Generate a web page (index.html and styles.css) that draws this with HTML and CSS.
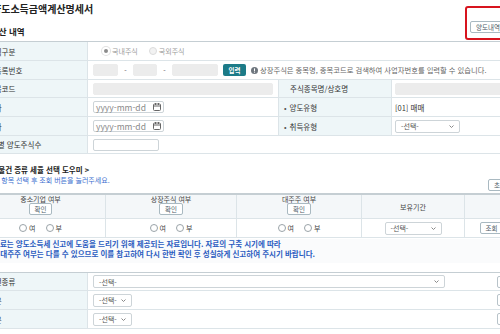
FILE: index.html
```html
<!DOCTYPE html>
<html lang="ko">
<head>
  <meta charset="UTF-8">
  <meta name="viewport" content="width=device-width, initial-scale=1.0">
  <title>양도소득금액계산명세서</title>
  <link rel="stylesheet" href="styles.css">
</head>
<body>
  <div class="page">
    <h1 class="title">양도소득금액계산명세서</h1>

    <div class="section-head">
      <h2>계산 내역</h2>
      <div class="highlight">
        <button class="btn">양도내역</button>
      </div>
    </div>

    <!-- 계산 내역 -->
    <div class="grid calc-grid">
      <div class="th">양도주식구분</div>
      <div class="td span3">
        <label class="radio disabled"><span class="dot checked"></span>국내주식</label>
        <label class="radio disabled"><span class="dot"></span>국외주식</label>
      </div>

      <div class="th">사업자등록번호</div>
      <div class="td span3">
        <span class="input gray w25"></span>
        <span class="dash">-</span>
        <span class="input gray w24"></span>
        <span class="dash">-</span>
        <span class="input gray w46"></span>
        <button class="btn-teal">입력</button>
        <svg class="info-icon" width="7" height="7" viewBox="0 0 8 8">
          <circle cx="4" cy="4" r="4" fill="#6e767e"/>
          <rect x="3.4" y="1.6" width="1.2" height="3" fill="#fff"/>
          <rect x="3.4" y="5.3" width="1.2" height="1.2" fill="#fff"/>
        </svg>
        <span class="hint">상장주식은 종목명, 종목코드로 검색하여 사업자번호를 입력할 수 있습니다.</span>
      </div>

      <div class="th">주식종목코드</div>
      <div class="td">
        <span class="input gray full"></span>
      </div>
      <div class="th sub indent">주식종목명/상호명</div>
      <div class="td last">
        <span class="input gray full"></span>
      </div>

      <div class="th">양도일자</div>
      <div class="td">
        <span class="input date">yyyy-mm-dd
          <svg width="8" height="8" viewBox="0 0 8 8">
            <rect x="0.5" y="1" width="7" height="6.5" rx="1" fill="none" stroke="#666"/>
            <path d="M0.5 3h7M2.5 0v2M5.5 0v2" stroke="#666"/>
          </svg>
        </span>
      </div>
      <div class="th sub"><span class="bullet">•</span>양도유형</div>
      <div class="td last">[01] 매매</div>

      <div class="th">취득일자</div>
      <div class="td">
        <span class="input date">yyyy-mm-dd
          <svg width="8" height="8" viewBox="0 0 8 8">
            <rect x="0.5" y="1" width="7" height="6.5" rx="1" fill="none" stroke="#666"/>
            <path d="M0.5 3h7M2.5 0v2M5.5 0v2" stroke="#666"/>
          </svg>
        </span>
      </div>
      <div class="th sub"><span class="bullet">•</span>취득유형</div>
      <div class="td last">
        <span class="select w65">-선택-
          <svg width="5" height="3" viewBox="0 0 5 3"><path d="M0.5 0.5L2.5 2.5L4.5 0.5" fill="none" stroke="#888"/></svg>
        </span>
      </div>

      <div class="th wide">종목별 양도주식수</div>
      <div class="td span3">
        <span class="input w66"></span>
      </div>
    </div>

    <!-- 세율 선택 도우미 -->
    <div class="helper-head">
      <div>
        <div class="helper-title">&lt; 양도물건 종류 세율 선택 도우미 &gt;</div>
        <div class="helper-desc">아래 세 항목 선택 후 조회 버튼을 눌러주세요.</div>
      </div>
      <button class="btn end">초기화</button>
    </div>

    <div class="grid check-grid">
      <div class="ch">중소기업 여부<button class="btn">확인</button></div>
      <div class="ch">상장주식 여부<button class="btn">확인</button></div>
      <div class="ch">대주주 여부<button class="btn">확인</button></div>
      <div class="ch center">보유기간</div>
      <div class="ch last"></div>

      <div class="cd">
        <label class="radio"><span class="dot"></span>여</label>
        <label class="radio"><span class="dot"></span>부</label>
      </div>
      <div class="cd">
        <label class="radio"><span class="dot"></span>여</label>
        <label class="radio"><span class="dot"></span>부</label>
      </div>
      <div class="cd">
        <label class="radio"><span class="dot"></span>여</label>
        <label class="radio"><span class="dot"></span>부</label>
      </div>
      <div class="cd">
        <span class="select w57">-선택-
          <svg width="5" height="3" viewBox="0 0 5 3"><path d="M0.5 0.5L2.5 2.5L4.5 0.5" fill="none" stroke="#888"/></svg>
        </span>
      </div>
      <div class="cd last"><button class="btn">조회</button></div>
    </div>

    <div class="notice">
      본 자료는 양도소득세 신고에 도움을 드리기 위해 제공되는 자료입니다. 자료의 구축 시기에 따라<br>
      상장·대주주 여부는 다를 수 있으므로 이를 참고하여 다시 한번 확인 후 성실하게 신고하여 주시기 바랍니다.
    </div>

    <!-- 양도물건 종류 -->
    <div class="grid kind-grid">
      <div class="th">양도물건종류</div>
      <div class="td">
        <span class="select w352">-선택-
          <svg width="5" height="3" viewBox="0 0 5 3"><path d="M0.5 0.5L2.5 2.5L4.5 0.5" fill="none" stroke="#888"/></svg>
        </span>
        <span class="side-box"></span>
      </div>

      <div class="th">세율구분</div>
      <div class="td">
        <span class="select w39">-선택-
          <svg width="5" height="3" viewBox="0 0 5 3"><path d="M0.5 0.5L2.5 2.5L4.5 0.5" fill="none" stroke="#888"/></svg>
        </span>
        <span class="side-box"></span>
      </div>

      <div class="th">감면구분</div>
      <div class="td">
        <span class="select w39">-선택-
          <svg width="5" height="3" viewBox="0 0 5 3"><path d="M0.5 0.5L2.5 2.5L4.5 0.5" fill="none" stroke="#888"/></svg>
        </span>
        <span class="side-box"></span>
      </div>
    </div>
  </div>
</body>
</html>
```

FILE: styles.css
```css
* {
  box-sizing: border-box;
}

body {
  margin: 0;
  overflow: hidden;
  background: #fff;
  font-family: "Noto Sans CJK KR", "Noto Sans", sans-serif;
  color: #333;
}

.page {
  width: 550px;
  margin-left: -32px;
}

.title {
  margin: 0;
  padding: 2px 0 0 24px;
  font-size: 10px;
  line-height: 13px;
  font-weight: 700;
  color: #222;
}

.section-head {
  display: flex;
  justify-content: space-between;
  align-items: flex-end;
  height: 26px;
  padding: 0 7px 0 23px;
}

.section-head h2 {
  margin: 0 0 4px;
  font-size: 8.5px;
  line-height: 11px;
  font-weight: 700;
  color: #222;
}

.highlight {
  margin-bottom: 1px;
  padding: 3px;
  border: 2px solid #d7141e;
  border-radius: 3px;
}

.btn {
  height: 12px;
  padding: 0 5px;
  border: 1px solid #a9b9c1;
  border-radius: 2px;
  background: #fff;
  font-family: inherit;
  font-size: 6.5px;
  line-height: 10px;
  color: #4f5d68;
  cursor: pointer;
}

.btn.end {
  align-self: flex-end;
}

/* grids */
.grid {
  display: grid;
  border-top: 1px solid #c5ced3;
}

.calc-grid {
  grid-template-columns: 120px 190px 114px 1fr;
  grid-template-rows: 19px 19px 18px 19px 19px 18px;
}

.th {
  display: flex;
  align-items: center;
  padding-left: 6px;
  background: #eef6f8;
  border-bottom: 1px solid #dce4e8;
  border-right: 1px solid #dce4e8;
  font-size: 7.5px;
  color: #333;
  white-space: nowrap;
}

.th.wide {
  padding-left: 16px;
}

.th.sub {
  padding-left: 5px;
  border-left: 1px solid #dce4e8;
}

.th.indent {
  padding-left: 11px;
}

.bullet {
  margin-right: 3px;
  color: #555;
}

.td {
  display: flex;
  align-items: center;
  padding: 0 5px;
  border-bottom: 1px solid #dce4e8;
  font-size: 7.5px;
  color: #333;
  white-space: nowrap;
}

.td.last {
  padding-left: 3px;
}

.span3 {
  grid-column: span 3;
}

/* form controls */
.input {
  display: inline-flex;
  align-items: center;
  height: 12px;
  border: 1px solid #cdd4d8;
  border-radius: 2px;
  background: #fff;
}

.input.gray {
  background: #ececec;
  border-color: #ececec;
}

.full { width: 100%; }
.w24 { width: 24px; }
.w25 { width: 25px; }
.w46 { width: 46px; }
.w66 { width: 66px; }

.dash {
  width: 15px;
  text-align: center;
  font-size: 7px;
  color: #555;
}

.btn-teal {
  height: 12px;
  width: 23px;
  margin-left: 5px;
  padding: 0;
  border: none;
  border-radius: 2px;
  background: #1c7b88;
  font-family: inherit;
  font-size: 6.5px;
  font-weight: 700;
  color: #fff;
}

.info-icon {
  margin-left: 5px;
}

.hint {
  margin-left: 2px;
  font-size: 7.3px;
  color: #666;
}

.date {
  width: 71px;
  padding: 0 2px;
  justify-content: space-between;
  font-size: 8.5px;
  color: #8a8a8a;
}

.select {
  display: inline-flex;
  align-items: center;
  justify-content: space-between;
  height: 13px;
  padding: 0 5px;
  border: 1px solid #cdd4d8;
  border-radius: 2px;
  background: #fff;
  font-size: 7px;
  color: #555;
}

.w39 { width: 39px; }
.w57 { width: 57px; }
.w65 { width: 65px; }
.w352 { width: 352px; }

.side-box {
  width: 16px;
  height: 12px;
  margin-left: auto;
  border: 1px solid #b8c3c9;
  border-radius: 2px;
}

.radio {
  display: inline-flex;
  align-items: center;
  gap: 2px;
  font-size: 7px;
  color: #444;
}

.radio + .radio {
  margin-left: 10px;
}

.radio.disabled {
  color: #9a9a9a;
}

.radio.disabled + .radio.disabled {
  margin-left: 11px;
}

.calc-grid .radio:first-child {
  margin-left: 9px;
}

.dot {
  width: 8px;
  height: 8px;
  border: 1px solid #9aa3a8;
  border-radius: 50%;
  background: #fff;
}

.radio.disabled .dot {
  border-color: #dcdcdc;
  background: #f2f2f2;
}

.radio.disabled .dot.checked {
  border: 2px solid #fff;
  background: #8c8c8c;
  box-shadow: 0 0 0 1px #e2e2e2;
}

/* helper */
.helper-head {
  display: flex;
  justify-content: space-between;
  height: 26px;
  margin-top: 11px;
  padding-left: 10px;
}

.helper-title {
  font-size: 7.5px;
  line-height: 10px;
  font-weight: 700;
  color: #222;
}

.helper-desc {
  font-size: 7px;
  line-height: 10px;
  color: #3d6fcf;
}

.check-grid {
  grid-template-columns: 130px 131px 125px 103px 1fr;
  margin: 2px 0 0 8px;
  border-top: 2px solid #c5ced3;
}

.ch {
  display: flex;
  flex-direction: column;
  align-items: center;
  height: 24px;
  background: #f4f7f9;
  border-bottom: 1px solid #dce4e8;
  border-right: 1px solid #dce4e8;
  font-size: 7px;
  line-height: 8px;
  color: #444;
}

.ch.center {
  justify-content: center;
}

.cd {
  display: flex;
  align-items: center;
  justify-content: center;
  height: 19px;
  border-bottom: 1px solid #dce4e8;
  border-right: 1px solid #dce4e8;
}

.ch.last,
.cd.last {
  border-right: none;
}

.notice {
  margin-top: 1px;
  padding: 0 0 4px 16px;
  background: #fafbfc;
  font-size: 7.5px;
  line-height: 10px;
  font-weight: 700;
  color: #2a5cc0;
  white-space: nowrap;
}

.kind-grid {
  grid-template-columns: 120px 1fr;
  grid-template-rows: 18px 19px 19px;
  margin-top: 9px;
}
```
